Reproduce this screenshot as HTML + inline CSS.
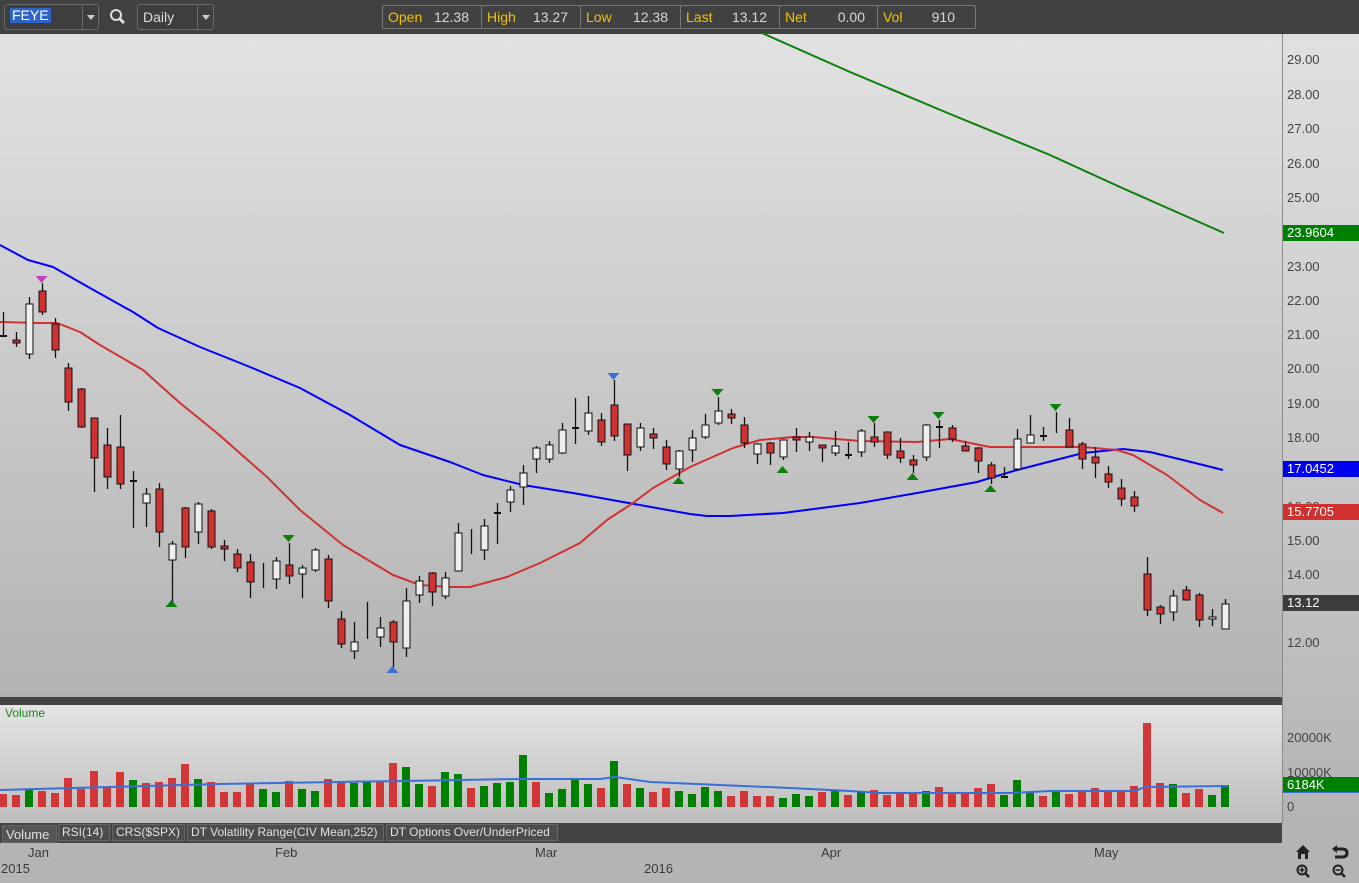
<!DOCTYPE html>
<html><head><meta charset="utf-8">
<style>
*{margin:0;padding:0;box-sizing:border-box}
body{width:1359px;height:883px;overflow:hidden;background:#b4b4b4;font-family:"Liberation Sans",sans-serif;position:relative}
.tb{position:absolute;left:0;top:0;width:1359px;height:34px;background:#414141}
.box{position:absolute;border:1px solid #6a6a6a;border-radius:3px;background:#3e3e3e}
.dd{position:absolute;top:0;bottom:0;right:0;width:16px;border-left:1px solid #6a6a6a}
.dd:after{content:"";position:absolute;left:4px;top:10px;border-left:4px solid transparent;border-right:4px solid transparent;border-top:5px solid #ccc}
.q{position:absolute;left:382px;top:5px;width:594px;height:24px;border:1px solid #777;border-radius:2px}
.qs{position:absolute;top:0;height:22px;border-right:1px solid #777;font-size:14px;line-height:22px}
.ql{position:absolute;left:5px;color:#f2c200}
.qv{position:absolute;right:12px;color:#d8d8d8}
.main{position:absolute;left:0;top:34px;width:1282px;height:663px;background:linear-gradient(#e2e2e2,#b3b3b3)}
.rax{position:absolute;left:1282px;top:34px;width:77px;height:789px;background:linear-gradient(#e0e0e0,#b4b4b4);border-left:1px solid #8c8c8c}
.lbl{position:absolute;left:1287px;font-size:13px;color:#444}
.tag{position:absolute;left:1283px;width:76px;height:16px;color:#fff;font-size:13px;line-height:16px;padding-left:4px}
.sep{position:absolute;left:0;top:697px;width:1282px;height:8px;background:#434343}
.vol{position:absolute;left:0;top:705px;width:1282px;height:118px;background:linear-gradient(#e4e4e4,#bdbdbd)}
.tabs{position:absolute;left:0;top:823px;width:1282px;height:20px;background:#444}
.tab{position:absolute;top:1px;height:17px;background:#4c4c4c;border:1px solid #666;color:#e0e0e0;font-size:12px;line-height:15px;padding:0 3px;white-space:nowrap;overflow:hidden}
.dl{position:absolute;font-size:13px;color:#3a3a3a}
</style></head><body>
<div class="tb">
 <div class="box" style="left:4px;top:4px;width:95px;height:26px">
  <span style="position:absolute;left:5px;top:3px;background:#2f63c8;color:#fff;font-size:14px;line-height:15px;padding:0 2px">FEYE</span>
  <div class="dd"></div></div>
 <svg style="position:absolute;left:109px;top:8px" width="18" height="18" viewBox="0 0 18 18"><circle cx="7" cy="7" r="5" fill="none" stroke="#ddd" stroke-width="2"/><path d="M10.5 10.5 L15 15" stroke="#ddd" stroke-width="3"/></svg>
 <div class="box" style="left:137px;top:4px;width:77px;height:26px">
  <span style="position:absolute;left:5px;top:4px;color:#ddd;font-size:14px">Daily</span>
  <div class="dd"></div></div>
 <div class="q">
  <div class="qs" style="left:0;width:99px"><span class="ql">Open</span><span class="qv">12.38</span></div>
  <div class="qs" style="left:99px;width:99px"><span class="ql">High</span><span class="qv">13.27</span></div>
  <div class="qs" style="left:198px;width:100px"><span class="ql">Low</span><span class="qv">12.38</span></div>
  <div class="qs" style="left:298px;width:99px"><span class="ql">Last</span><span class="qv">13.12</span></div>
  <div class="qs" style="left:397px;width:98px"><span class="ql">Net</span><span class="qv">0.00</span></div>
  <div class="qs" style="left:495px;width:97px;border-right:none"><span class="ql">Vol</span><span class="qv" style="right:20px">910</span></div>
 </div>
</div>
<div class="main"></div>
<div class="rax"></div>
<div class="sep"></div>
<div class="vol"></div>
<div class="tabs">
 <div class="tab" style="left:2px;width:55px;top:2px;height:18px;background:#555;line-height:17px;font-size:13px">Volume</div>
 <div class="tab" style="left:58px;width:52px">RSI(14)</div>
 <div class="tab" style="left:112px;width:73px">CRS($SPX)</div>
 <div class="tab" style="left:187px;width:197px">DT Volatility Range(CIV Mean,252)</div>
 <div class="tab" style="left:386px;width:172px">DT Options Over/UnderPriced</div>
</div>
<div style="position:absolute;left:1282px;top:823px;width:77px;height:60px;background:#b4b4b4"></div>

<div class="lbl" style="top:52px">29.00</div>
<div class="lbl" style="top:87px">28.00</div>
<div class="lbl" style="top:121px">27.00</div>
<div class="lbl" style="top:156px">26.00</div>
<div class="lbl" style="top:190px">25.00</div>
<div class="lbl" style="top:259px">23.00</div>
<div class="lbl" style="top:293px">22.00</div>
<div class="lbl" style="top:327px">21.00</div>
<div class="lbl" style="top:361px">20.00</div>
<div class="lbl" style="top:396px">19.00</div>
<div class="lbl" style="top:430px">18.00</div>
<div class="lbl" style="top:499px">16.00</div>
<div class="lbl" style="top:533px">15.00</div>
<div class="lbl" style="top:567px">14.00</div>
<div class="lbl" style="top:635px">12.00</div>
<div class="tag" style="top:225px;background:#008000">23.9604</div>
<div class="tag" style="top:461px;background:#0000f0">17.0452</div>
<div class="tag" style="top:504px;background:#d03030">15.7705</div>
<div class="tag" style="top:595px;background:#3c3c3c">13.12</div>
<div class="lbl" style="top:730px">20000K</div>
<div class="lbl" style="top:765px">10000K</div>
<div class="tag" style="top:777px;background:#008000;border-bottom:1px solid #3a6fd8">6184K</div>
<div class="lbl" style="top:799px">0</div>

<div style="position:absolute;left:5px;top:706px;font-size:12px;color:#1a8a1a">Volume</div>
<div class="dl" style="left:28px;top:845px">Jan</div>
<div class="dl" style="left:1px;top:861px">2015</div>
<div class="dl" style="left:275px;top:845px">Feb</div>
<div class="dl" style="left:535px;top:845px">Mar</div>
<div class="dl" style="left:644px;top:861px">2016</div>
<div class="dl" style="left:821px;top:845px">Apr</div>
<div class="dl" style="left:1094px;top:845px">May</div>

<svg style="position:absolute;left:1294px;top:844px" width="60" height="36" viewBox="0 0 60 36">
 <path d="M2 8 L9 1 L16 8 L14 8 L14 15 L11 15 L11 10 L7 10 L7 15 L4 15 L4 8Z" fill="#222"/>
 <path d="M40 5 L48 5 Q53 5 53 9 Q53 13 48 13 L41 13" fill="none" stroke="#222" stroke-width="3"/>
 <path d="M38 5 L43 1 L43 9Z" fill="#222"/>
 <circle cx="8" cy="26" r="4.5" fill="none" stroke="#222" stroke-width="2"/><path d="M11 29 L15 33" stroke="#222" stroke-width="2.5"/><path d="M5.5 26 H10.5 M8 23.5 V28.5" stroke="#222" stroke-width="1.5"/>
 <circle cx="44" cy="26" r="4.5" fill="none" stroke="#222" stroke-width="2"/><path d="M47 29 L51 33" stroke="#222" stroke-width="2.5"/><path d="M41.5 26 H46.5" stroke="#222" stroke-width="1.5"/>
</svg>

<svg id="ch" style="position:absolute;left:0;top:0" width="1282" height="823" viewBox="0 0 1282 823"></svg>
<script>
var C=[[336,336,312,336,'d'],[340,343,332,347,'r'],[304,354,297,359,'w'],[291,312,283,315,'r'],[324,350,318,358,'r'],[368,402,363,411,'r'],[389,427,388,428,'r'],[418,458,418,492,'r'],[445,477,428,489,'r'],[447,484,415,489,'r'],[481,481,471,528,'d'],[494,503,488,527,'w'],[489,532,483,547,'r'],[544,560,541,603,'w'],[508,547,507,558,'r'],[504,532,502,544,'w'],[511,547,509,549,'r'],[546,549,540,561,'r'],[554,568,549,572,'r'],[562,582,554,598,'r'],[575,575,563,588,'l'],[561,579,557,589,'w'],[565,576,543,584,'r'],[568,574,565,598,'w'],[550,570,548,572,'w'],[559,601,555,608,'r'],[619,644,611,648,'r'],[642,651,622,659,'w'],[620,620,602,639,'l'],[628,637,617,647,'w'],[622,642,620,667,'r'],[601,648,588,657,'w'],[581,595,576,603,'w'],[573,592,572,606,'r'],[578,596,572,599,'w'],[533,571,523,571,'w'],[540,540,529,554,'l'],[526,550,519,560,'w'],[513,513,503,544,'d'],[490,502,486,512,'w'],[473,487,465,505,'w'],[448,459,446,473,'w'],[445,459,441,463,'w'],[430,453,423,454,'w'],[428,428,398,444,'d'],[413,431,396,435,'w'],[420,442,413,446,'r'],[405,436,380,441,'r'],[424,455,424,471,'r'],[428,447,423,451,'w'],[434,438,428,449,'r'],[447,464,440,470,'r'],[451,469,450,477,'w'],[438,450,430,462,'w'],[425,437,414,439,'w'],[411,423,397,425,'w'],[414,418,409,424,'r'],[425,443,417,448,'r'],[444,454,443,464,'w'],[443,453,442,465,'r'],[440,457,440,460,'w'],[437,440,428,452,'r'],[437,442,432,451,'w'],[445,448,445,462,'r'],[446,453,431,456,'w'],[455,455,442,459,'d'],[431,452,429,457,'w'],[437,442,423,447,'r'],[432,455,432,459,'r'],[451,458,438,463,'r'],[460,465,455,473,'r'],[425,457,424,461,'w'],[427,427,420,448,'d'],[428,439,425,442,'r'],[446,451,441,451,'r'],[448,461,447,473,'r'],[465,478,462,484,'r'],[477,477,467,478,'d'],[439,469,429,471,'w'],[435,443,415,443,'w'],[436,436,427,441,'d'],[420,420,412,433,'l'],[430,447,418,447,'r'],[444,459,442,469,'r'],[457,463,447,478,'r'],[474,482,466,488,'r'],[488,499,479,506,'r'],[497,506,491,512,'r'],[574,610,557,616,'r'],[607,614,605,624,'r'],[596,612,590,621,'w'],[590,600,586,600,'r'],[595,620,593,627,'r'],[617,619,609,626,'w'],[604,629,599,629,'w']];
var V=[[794,'r'],[795,'r'],[789,'g'],[791,'r'],[793,'r'],[778,'r'],[789,'r'],[771,'r'],[787,'r'],[772,'r'],[780,'g'],[783,'r'],[782,'r'],[778,'r'],[764,'r'],[779,'g'],[782,'r'],[792,'r'],[792,'r'],[784,'r'],[789,'g'],[792,'g'],[781,'r'],[789,'g'],[791,'g'],[779,'r'],[783,'r'],[783,'g'],[782,'g'],[782,'r'],[763,'r'],[767,'g'],[784,'g'],[786,'r'],[772,'g'],[774,'g'],[788,'r'],[786,'g'],[783,'g'],[782,'g'],[755,'g'],[782,'r'],[793,'g'],[789,'g'],[780,'g'],[784,'g'],[788,'r'],[761,'g'],[784,'r'],[788,'g'],[792,'r'],[788,'r'],[791,'g'],[794,'g'],[787,'g'],[791,'g'],[796,'r'],[791,'r'],[796,'r'],[796,'r'],[798,'g'],[794,'g'],[796,'g'],[792,'r'],[790,'g'],[795,'r'],[792,'g'],[790,'r'],[795,'r'],[793,'r'],[793,'r'],[791,'g'],[787,'r'],[793,'r'],[793,'r'],[788,'r'],[784,'r'],[795,'g'],[780,'g'],[792,'g'],[796,'r'],[791,'g'],[794,'r'],[791,'r'],[788,'r'],[791,'r'],[791,'r'],[786,'r'],[723,'r'],[783,'r'],[784,'g'],[793,'r'],[789,'r'],[795,'g'],[785,'g']];
var s='';
function pl(p,c,w){return '<polyline fill="none" stroke="'+c+'" stroke-width="'+w+'" stroke-linejoin="round" points="'+p+'"/>';}
s+=pl('762,33 850,72 950,114 1050,155 1120,187 1224,233','#0a800a',2);
s+=pl('0,245 28,260 53,267 90,288 133,312 158,328 200,347 250,367 300,388 350,415 400,445 450,462 483,475 523,485 573,493 623,502 690,514 707,516 730,516 783,513 860,503 917,493 977,482 1017,470 1083,453 1123,449 1150,452 1183,460 1223,470','#0000ff',2);
s+=pl('0,322 40,323 57,323 80,332 100,345 143,370 180,403 217,433 267,477 300,510 343,545 393,575 420,585 450,587 470,587 507,577 540,563 580,543 607,520 633,503 653,488 690,467 733,448 760,440 793,437 813,437 860,441 917,442 950,439 990,447 1030,447 1083,447 1117,450 1133,455 1167,475 1200,500 1223,513','#d03232',2);
for(var i=0;i<C.length;i++){var c=C[i],x=3+13*i;
 s+='<line x1="'+(x+.5)+'" y1="'+c[2]+'" x2="'+(x+.5)+'" y2="'+c[3]+'" stroke="#111" stroke-width="1.3"/>';
 if(c[4]=='d'){s+='<rect x="'+(x-3)+'" y="'+(c[0]-1)+'" width="7" height="2" fill="#111"/>';}
 else if(c[4]!='l'){var h=Math.max(c[1]-c[0],2);s+='<rect x="'+(x-3)+'" y="'+c[0]+'" width="7" height="'+h+'" fill="'+(c[4]=='r'?'#d03232':'#efefef')+'" stroke="#111" stroke-width="1"/>';}}
var T=[[41,279,'d','#c040c0'],[171,604,'u','#0a800a'],[288,538,'d','#0a800a'],[392,670,'u','#3a70d8'],[613,376,'d','#3a70d8'],[678,481,'u','#0a800a'],[717,392,'d','#0a800a'],[782,470,'u','#0a800a'],[873,419,'d','#0a800a'],[912,477,'u','#0a800a'],[938,415,'d','#0a800a'],[990,489,'u','#0a800a'],[1055,407,'d','#0a800a']];
T.forEach(function(t){var x=t[0]+.5,y=t[1];s+=t[2]=='d'?'<path d="M'+(x-6)+' '+(y-3)+' L'+(x+6)+' '+(y-3)+' L'+x+' '+(y+4)+'Z" fill="'+t[3]+'"/>':'<path d="M'+(x-6)+' '+(y+3)+' L'+(x+6)+' '+(y+3)+' L'+x+' '+(y-4)+'Z" fill="'+t[3]+'"/>';});
for(var j=0;j<V.length;j++){var v=V[j],x=3+13*j;s+='<rect x="'+(x-4)+'" y="'+v[0]+'" width="8" height="'+(807-v[0])+'" fill="'+(v[1]=='r'?'#d23636':'#008000')+'"/>';}
s+=pl('0,790 220,784 520,779 600,779 615,777 650,782 720,785 790,788 850,791 880,793 1010,793 1050,791 1135,791 1145,787 1228,786','#3a6fd8',2);
document.getElementById('ch').innerHTML=s;
</script>
</body></html>
